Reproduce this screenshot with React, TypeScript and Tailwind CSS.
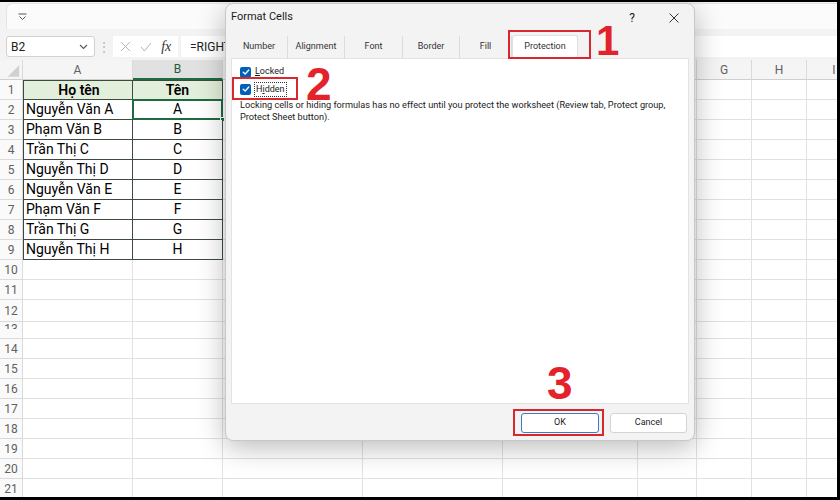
import React from "react";

const COLS = [23, 110, 90, 140, 140, 135, 59, 55, 55, 55];
const LETTERS = ["", "A", "B", "C", "D", "E", "F", "G", "H", "I"];

const DATA: [string, string][] = [
  ["Họ tên", "Tên"],
  ["Nguyễn Văn A", "A"],
  ["Phạm Văn B", "B"],
  ["Trần Thị C", "C"],
  ["Nguyễn Thị D", "D"],
  ["Nguyễn Văn E", "E"],
  ["Phạm Văn F", "F"],
  ["Trần Thị G", "G"],
  ["Nguyễn Thị H", "H"],
];

const TABS = [
  { label: "Number", w: 57 },
  { label: "Alignment", w: 57 },
  { label: "Font", w: 58 },
  { label: "Border", w: 57 },
  { label: "Fill", w: 52 },
];

function Check() {
  return (
    <span className="w-[11px] h-[11px] rounded-[2px] bg-[#005fb8] flex items-center justify-center shrink-0">
      <svg width="8" height="8" viewBox="0 0 8 8" fill="none">
        <path d="M1.2 4.2 L3.2 6 L6.8 2" stroke="white" strokeWidth="1.3" strokeLinecap="round" strokeLinejoin="round" />
      </svg>
    </span>
  );
}

function GridRow({ n, h = 20 }: { n: number; h?: number }) {
  const row = n >= 1 && n <= 9 ? DATA[n - 1] : null;
  return (
    <div className="flex shrink-0" style={{ height: h }}>
      <div className="w-[23px] shrink-0 border-r border-b border-[#dadada] bg-[#fafafa] flex items-center justify-center text-[12px] text-[#616161] overflow-hidden">
        {n === 13 ? (
          <div className="h-[7px] overflow-hidden self-start leading-[14px]">13</div>
        ) : (
          n
        )}
      </div>
      {COLS.slice(1).map((w, ci) => {
        const inTable = row && ci < 2;
        const header = n === 1;
        if (inTable) {
          return (
            <div
              key={ci}
              style={{ width: w }}
              className={`relative shrink-0 flex items-center text-[14px] text-black border-b border-r border-[#3c4a40] ${ci === 0 ? "border-l pl-[2px]" : "justify-center"} ${header ? "bg-[#e2efda] font-semibold justify-center border-t" : "bg-white"}`}
            >
              {row![ci]}
              {n === 2 && ci === 1 && (
                <>
                  <div className="absolute -inset-[1px] border-2 border-[#1e6b41]" />
                  <div className="absolute -right-[3px] -bottom-[3px] w-[5px] h-[5px] bg-[#1e6b41] border border-white" />
                </>
              )}
            </div>
          );
        }
        return <div key={ci} style={{ width: w }} className="shrink-0 bg-white border-r border-b border-[#e1e1e1]" />;
      })}
    </div>
  );
}

export default function App() {
  const rows = Array.from({ length: 21 }, (_, i) => i + 1);
  return (
    <div className="relative w-[840px] h-[500px] overflow-hidden border-t-2 border-r-[3px] border-b-[3px] border-black bg-[#f3f3f3] font-['Roboto',sans-serif] flex flex-col">
      {/* quick access */}
      <div className="h-[27px] pl-[6px] pt-px shrink-0">
        <div className="h-full rounded-tl-md bg-[#fbfbfb] border-l border-t border-[#e4e4e4] flex items-center pl-[11px]">
          <svg width="9" height="8" viewBox="0 0 9 8" fill="none" stroke="#555" strokeWidth="1">
            <path d="M0.5 1 H8.5" />
            <path d="M1.5 3.5 L4.5 6.5 L7.5 3.5" />
          </svg>
        </div>
      </div>

      {/* formula bar */}
      <div className="mt-[7px] h-[21px] flex items-stretch pl-[6px] shrink-0">
        <div className="w-[89px] bg-white border border-[#d1d1d1] rounded-[3px] flex items-center justify-between pl-[4px] pr-[6px] text-[12px] text-[#222]">
          B2
          <svg width="9" height="6" viewBox="0 0 9 6" fill="none" stroke="#555" strokeWidth="1.1">
            <path d="M1 1 L4.5 4.5 L8 1" />
          </svg>
        </div>
        <div className="w-[18px] flex items-center justify-center text-[12px] text-[#b5b5b5]">⋮</div>
        <div className="w-[65px] bg-white flex items-center justify-around px-[2px]">
          <svg width="11" height="11" viewBox="0 0 11 11" stroke="#b4b4b4" strokeWidth="1">
            <path d="M1 1 L10 10 M10 1 L1 10" />
          </svg>
          <svg width="12" height="10" viewBox="0 0 12 10" fill="none" stroke="#b4b4b4" strokeWidth="1">
            <path d="M1 5 L4.5 9 L11 1" />
          </svg>
          <span className="italic font-['Liberation_Serif',serif] text-[14px] text-[#333]">fx</span>
        </div>
        <div className="ml-[3px] flex-1 bg-white flex items-center pl-[9px] text-[12px] text-[#222]">=RIGHT</div>
      </div>

      {/* column headers */}
      <div className="mt-[3px] h-[20px] flex shrink-0">
        {COLS.map((w, i) => (
          <div
            key={i}
            style={{ width: w }}
            className={`shrink-0 flex items-center justify-center text-[12px] border-r border-[#dadada] ${i === 2 ? "bg-[#e1e1e1] text-[#1f5f3a] border-b-2 border-b-[#1e6b41]" : "bg-[#f5f5f5] text-[#616161] border-b border-b-[#cfcfcf]"}`}
          >
            {i === 0 ? (
              <svg width="23" height="20" viewBox="0 0 23 20">
                <path d="M20 5 L20 17 L8 17 Z" fill="#d0d0d0" />
              </svg>
            ) : (
              LETTERS[i]
            )}
          </div>
        ))}
      </div>

      {/* grid */}
      <div className="flex flex-col">
        {rows.map((n) => (
          <GridRow key={n} n={n} h={n === 12 ? 22 : n === 13 ? 17 : 20} />
        ))}
      </div>

      {/* Format Cells dialog */}
      <div className="absolute left-[225px] top-px w-[470px] h-[438px] rounded-lg border border-[#c8c8c8] bg-[#f3f3f3] shadow-[0_6px_28px_rgba(0,0,0,0.28)] flex flex-col text-[#1b1b1b]">
        <div className="h-[27px] flex items-center pl-[5px] pr-[10px] text-[11px] shrink-0">
          <span className="flex-1">Format Cells</span>
          <span className="w-[20px] text-center text-[12px] mr-[22px]">?</span>
          <span className="w-[20px] flex justify-center">
            <svg width="10" height="10" viewBox="0 0 10 10" stroke="#333" strokeWidth="1">
              <path d="M0.5 0.5 L9.5 9.5 M9.5 0.5 L0.5 9.5" />
            </svg>
          </span>
        </div>

        <div className="mt-[5px] h-[22px] flex px-[5px] items-end shrink-0 text-[9px] text-[#333]">
          {TABS.map((t) => (
            <div key={t.label} style={{ width: t.w }} className="h-[22px] flex items-center justify-center border-r border-[#dcdcdc] shrink-0">
              {t.label}
            </div>
          ))}
          <div className="w-[66px] h-[23px] bg-white border border-b-0 border-[#e0e0e0] rounded-t-[3px] flex items-center justify-center">
            Protection
          </div>
        </div>

        <div className="mx-[5px] h-[346px] bg-white border border-[#e3e3e3] pt-[7px] pl-[8px] pr-[6px] text-[9px] shrink-0">
          <div className="h-[12px] flex items-center gap-[4px]">
            <Check />
            <span>
              <span className="underline">L</span>ocked
            </span>
          </div>
          <div className="mt-[5px] h-[12px] flex items-center gap-[3px]">
            <Check />
            <span className="border border-dotted border-[#333] px-px leading-[13px]">
              H<span className="underline">i</span>dden
            </span>
          </div>
          <p className="mt-[4px] leading-[12px] text-[9.2px]">
            Locking cells or hiding formulas has no effect until you protect the worksheet (Review tab, Protect group,
            <br />
            Protect Sheet button).
          </p>
        </div>

        <div className="flex justify-end gap-[11px] pr-[7px] pt-[9px] text-[9px]">
          <button className="w-[78px] h-[20px] bg-white border border-[#3d7cc0] rounded-[3px]">OK</button>
          <button className="w-[77px] h-[20px] bg-white border border-[#d4d4d4] rounded-[3px]">Cancel</button>
        </div>
      </div>

      {/* red annotations */}
      <div className="absolute left-[508px] top-[28px] w-[83px] h-[29px] border-2 border-[#d8282d]" />
      <div className="absolute left-[232px] top-[75px] w-[66px] h-[23px] border-2 border-[#d8282d]" />
      <div className="absolute left-[513px] top-[407px] w-[91px] h-[27px] border-2 border-[#d8282d]" />
      <div className="absolute left-[596px] top-[18px] text-[42px] leading-none font-bold text-[#e3222a] font-['Liberation_Sans',sans-serif]">1</div>
      <div className="absolute left-[306px] top-[59px] text-[46px] leading-none font-bold text-[#e3222a] font-['Liberation_Sans',sans-serif]">2</div>
      <div className="absolute left-[547px] top-[358px] text-[46px] leading-none font-bold text-[#e3222a] font-['Liberation_Sans',sans-serif]">3</div>
    </div>
  );
}
